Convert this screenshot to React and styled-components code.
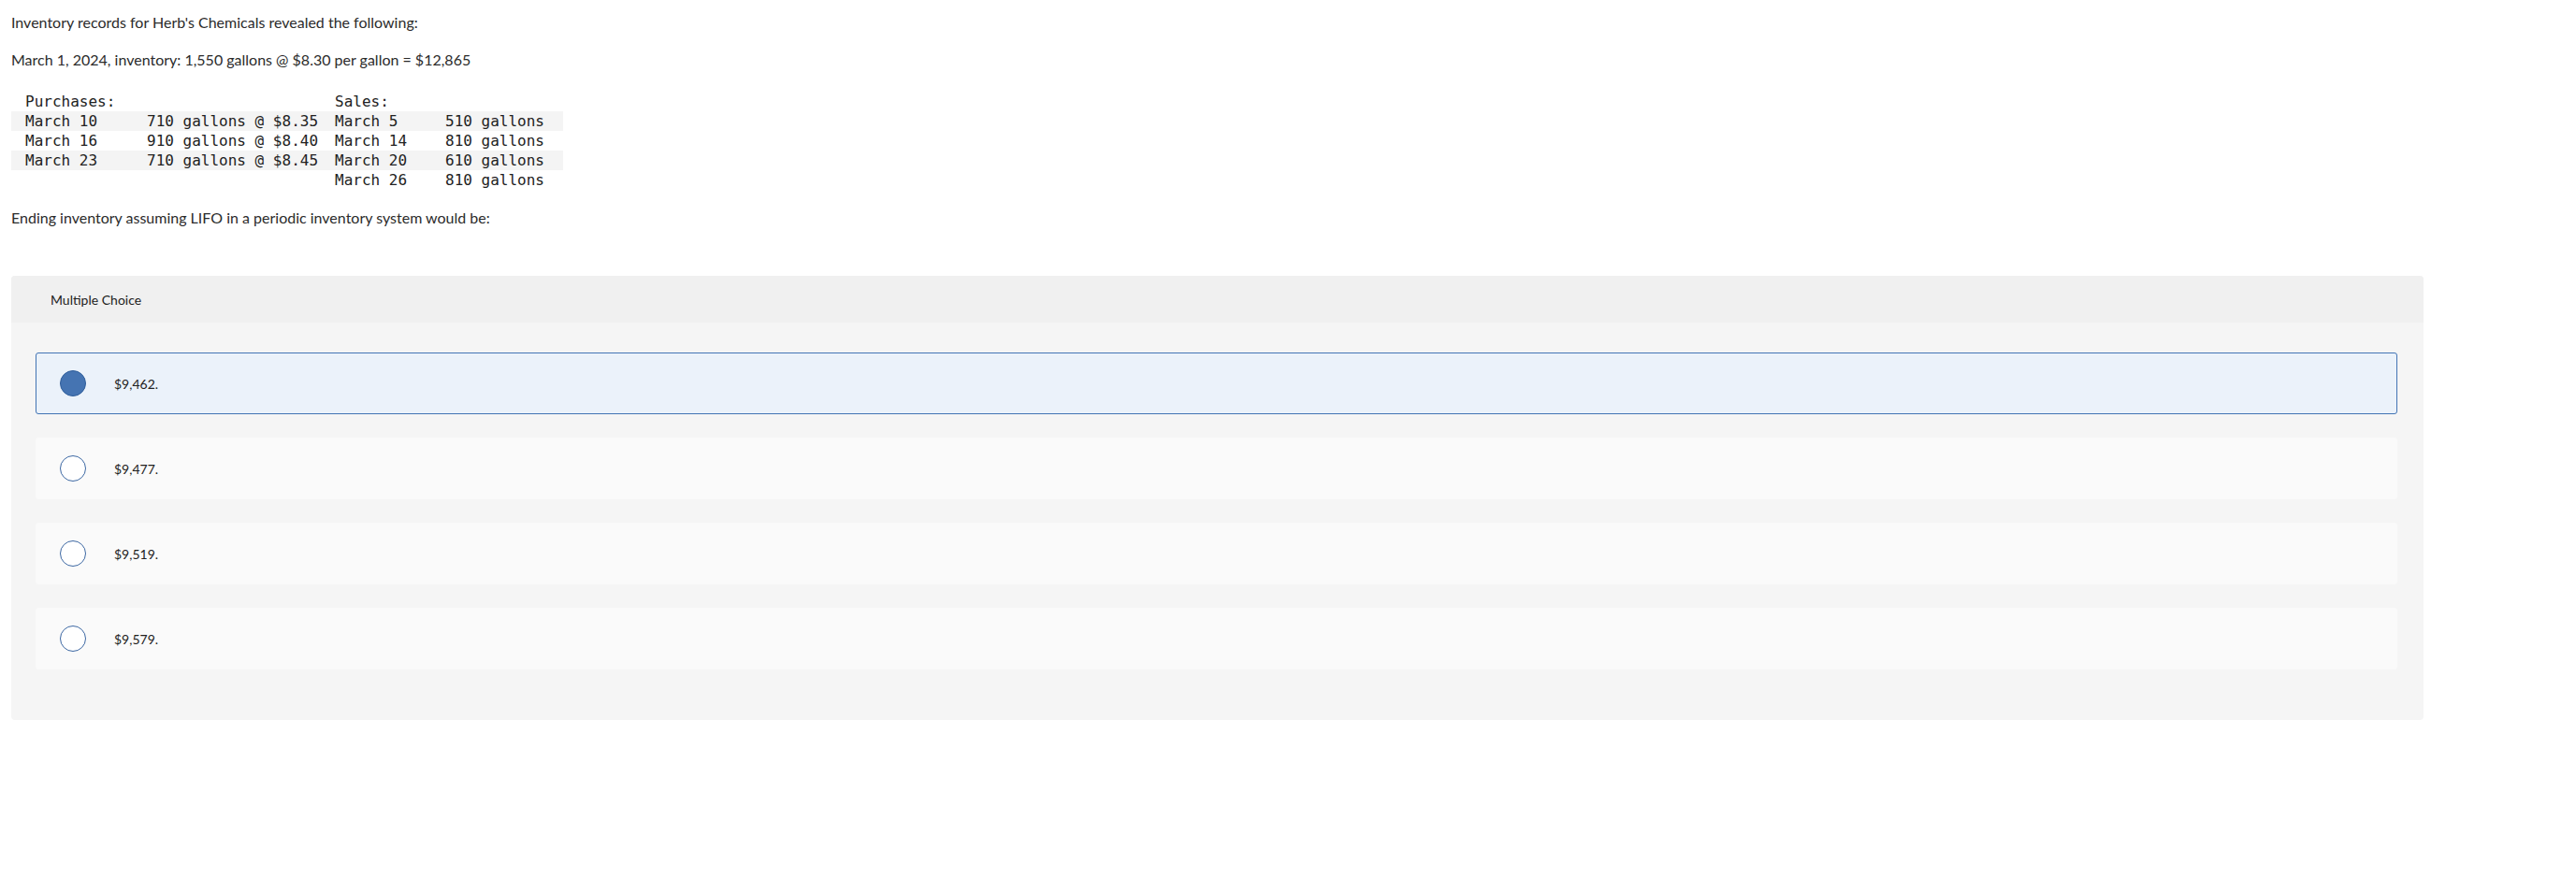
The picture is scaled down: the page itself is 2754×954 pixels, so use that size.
import React from "react";
import styled, { createGlobalStyle } from "styled-components";

const GlobalStyle = createGlobalStyle`
	body {
		margin: 0;
		background: #ffffff;
		font-family: Lato, "Open Sans", sans-serif;
		color: #2b2b2b;
	}
`

const Page = styled.div`
	padding: 12px 12px 40px 12px;
`

const Para = styled.p`
	margin: 0 0 ${props => props.gap || 16}px 0;
	font-size: 16px;
	line-height: 24px;
`

const Ledger = styled.div`
	width: 590px;
	margin: 0 0 18px 0;
	font-family: "DejaVu Sans Mono", "Liberation Mono", monospace;
	font-size: 16px;
	color: #222;
`

const LedgerRow = styled.div`
	display: grid;
	grid-template-columns: 130px 201px 118px 126px;
	padding-left: 15px;
	height: 21px;
	line-height: 21px;
	white-space: pre;
	background: ${props => props.shaded ? "#f4f4f4" : "transparent"};
`

const Panel = styled.div`
	width: 2579px;
	margin-top: 50px;
	background: #f5f5f5;
	border-radius: 4px;
	overflow: hidden;
`

const PanelHeader = styled.div`
	height: 50px;
	display: flex;
	align-items: center;
	padding-left: 42px;
	background: #f0f0f0;
	font-size: 14px;
	color: #222;
`

const Choices = styled.div`
	display: flex;
	flex-direction: column;
	gap: 25px;
	padding: 32px 28px 54px 26px;
`

const Choice = styled.label`
	display: flex;
	align-items: center;
	height: 66px;
	box-sizing: border-box;
	padding-left: 25px;
	border-radius: 3px;
	background: ${props => props.selected ? "#ebf2fa" : "#fafafa"};
	border: 1px solid ${props => props.selected ? "#4274b4" : "#fafafa"};
	font-size: 14px;
	color: #222;
`

const Radio = styled.span`
	width: 28px;
	height: 28px;
	box-sizing: border-box;
	border-radius: 50%;
	border: 1.5px solid ${props => props.checked ? "#2f5e9b" : "#3d68a3"};
	background: ${props => props.checked ? "#4574b2" : "#ffffff"};
	margin-right: 30px;
	flex-shrink: 0;
`

const purchases = [
	["March 10", "710 gallons @ $8.35", "March 5", "510 gallons"],
	["March 16", "910 gallons @ $8.40", "March 14", "810 gallons"],
	["March 23", "710 gallons @ $8.45", "March 20", "610 gallons"],
	["", "", "March 26", "810 gallons"],
];

const options = ["$9,462.", "$9,477.", "$9,519.", "$9,579."];

const App = () => {
	return (
		<>
			<GlobalStyle />
			<Page>
				<Para>Inventory records for Herb's Chemicals revealed the following:</Para>
				<Para gap={22}>March 1, 2024, inventory: 1,550 gallons @ $8.30 per gallon = $12,865</Para>
				<Ledger>
					<LedgerRow>
						<span>Purchases:</span>
						<span></span>
						<span>Sales:</span>
						<span></span>
					</LedgerRow>
					{purchases.map((row, i) => (
						<LedgerRow key={i} shaded={i % 2 === 0 && i < 3}>
							{row.map((cell, j) => <span key={j}>{cell}</span>)}
						</LedgerRow>
					))}
				</Ledger>
				<Para gap={0}>Ending inventory assuming LIFO in a periodic inventory system would be:</Para>
				<Panel>
					<PanelHeader>Multiple Choice</PanelHeader>
					<Choices>
						{options.map((opt, i) => (
							<Choice key={opt} selected={i === 0}>
								<Radio checked={i === 0} />
								{opt}
							</Choice>
						))}
					</Choices>
				</Panel>
			</Page>
		</>
	)
}

export default App;
